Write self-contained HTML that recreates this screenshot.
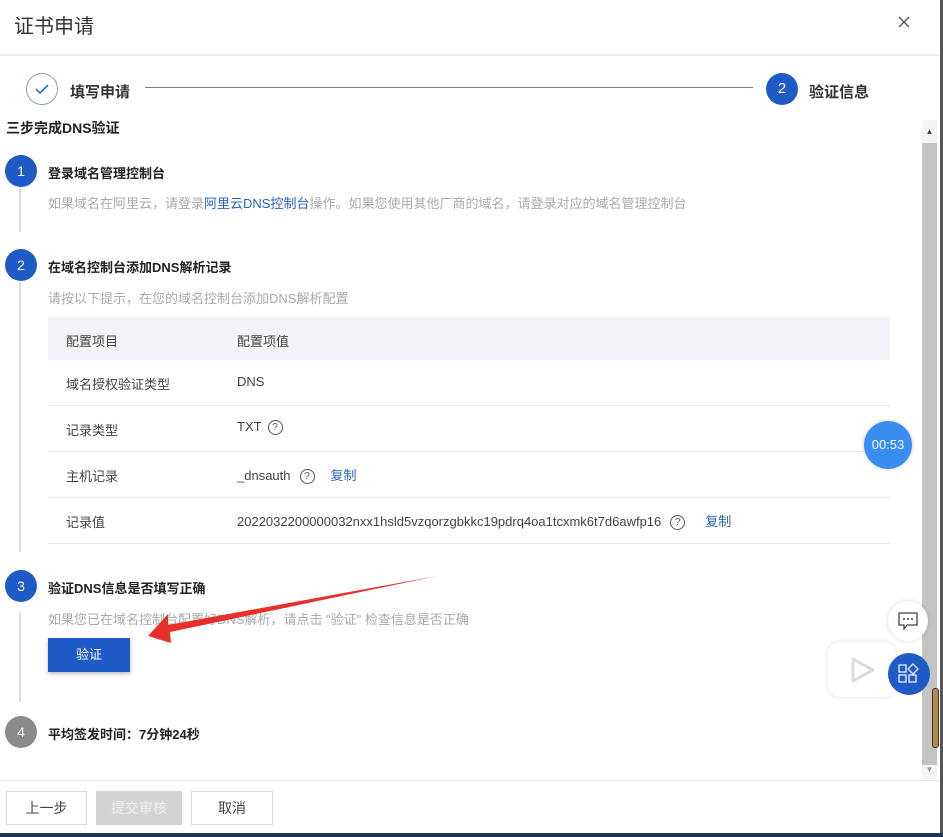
<!DOCTYPE html>
<html><head><meta charset="utf-8"><style>
*{margin:0;padding:0;box-sizing:border-box}
body{width:943px;height:837px;overflow:hidden;background:#fff;position:relative;font-family:"Liberation Sans","Noto Sans CJK SC",sans-serif;color:#333}
.a{position:absolute;white-space:nowrap}
.c{position:absolute;width:32px;height:32px;border-radius:50%;background:#1e5bc6;color:#fff;font-size:14px;text-align:center;line-height:32px}
.t{font-size:13px;font-weight:bold;color:#222}
.g{font-size:13px;color:#aaa}
.row{position:absolute;left:48px;width:842px;height:46px;border-bottom:1px solid #e8e8e8;font-size:13px;color:#444}
.row span{position:absolute;top:14px}
.q{display:inline-block;width:15px;height:15px;border:1.3px solid #555;border-radius:50%;font-size:10px;line-height:13px;text-align:center;color:#555;vertical-align:middle;margin-left:6px}
.lk{color:#2a62b8;margin-left:16px}
.btn{position:absolute;top:791px;height:34px;border:1px solid #d8d8d8;font-size:14px;text-align:center;line-height:32px;color:#444;background:#fff}
</style></head><body>
<div class="a" style="left:14px;top:10px;font-size:20px;color:#333">证书申请</div>
<svg class="a" style="left:898px;top:16px" width="12" height="12"><path d="M1 1L11 11M11 1L1 11" stroke="#555" stroke-width="1.3"/></svg>
<div class="a" style="left:0;top:54px;width:940px;height:2px;background:#f0f0f0"></div>
<div class="a" style="left:940px;top:0;width:3px;height:837px;background:#555"></div>

<div class="a" style="left:26px;top:73px;width:32px;height:32px;border:1.5px solid #8a9bbd;border-radius:50%"></div>
<svg class="a" style="left:34px;top:82px" width="16" height="14"><path d="M2 7L6 11L14 3" stroke="#1e5bc6" stroke-width="1.5" fill="none"/></svg>
<div class="a" style="left:70px;top:81px;font-size:15px;font-weight:bold;color:#333">填写申请</div>
<div class="a" style="left:145px;top:87px;width:608px;height:1px;background:#6a7fa6"></div>
<div class="c" style="left:766px;top:73px;font-size:15px">2</div>
<div class="a" style="left:809px;top:81px;font-size:15px;font-weight:bold;color:#333">验证信息</div>

<div class="a t" style="left:6px;top:118px;font-size:14px">三步完成DNS验证</div>

<div class="a" style="left:922px;top:120px;width:15px;height:23px;background:#f4f4f4;font-size:8px;text-align:center;line-height:23px;color:#444">▲</div>
<div class="a" style="left:922px;top:143px;width:15px;height:622px;background:#c3c3c3"></div>
<div class="a" style="left:932px;top:688px;width:7px;height:60px;background:#b38a4a;border:1px solid #333;border-radius:3px"></div>
<div class="a" style="left:922px;top:765px;width:15px;height:15px;background:#f4f4f4;font-size:8px;text-align:center;color:#999">▼</div>

<div class="a" style="left:19px;top:187px;width:2px;height:45px;background:#ddd"></div>
<div class="a" style="left:19px;top:282px;width:2px;height:270px;background:#ddd"></div>
<div class="a" style="left:19px;top:612px;width:2px;height:90px;background:#ddd"></div>

<div class="c" style="left:5px;top:155px">1</div>
<div class="a t" style="left:48px;top:163px">登录域名管理控制台</div>
<div class="a g" style="left:48px;top:193px">如果域名在阿里云，请登录<span style="color:#2a62b8">阿里云DNS控制台</span>操作。如果您使用其他厂商的域名，请登录对应的域名管理控制台</div>

<div class="c" style="left:5px;top:249px">2</div>
<div class="a t" style="left:48px;top:257px">在域名控制台添加DNS解析记录</div>
<div class="a g" style="left:48px;top:288px">请按以下提示，在您的域名控制台添加DNS解析配置</div>

<div class="row" style="top:317px;height:43px;background:#f2f4f7;border:none"><span style="left:18px;top:14px">配置项目</span><span style="left:189px;top:14px">配置项值</span></div>
<div class="row" style="top:360px"><span style="left:18px">域名授权验证类型</span><span style="left:189px">DNS</span></div>
<div class="row" style="top:406px"><span style="left:18px">记录类型</span><span style="left:189px;top:13px">TXT<i class="q" style="font-style:normal">?</i></span></div>
<div class="row" style="top:452px"><span style="left:18px">主机记录</span><span style="left:189px;top:13px">_dnsauth<i class="q" style="font-style:normal;margin-left:9px">?</i><span class="lk" style="position:static">复制</span></span></div>
<div class="row" style="top:498px"><span style="left:18px">记录值</span><span style="left:189px;top:13px">2022032200000032nxx1hsld5vzqorzgbkkc19pdrq4oa1tcxmk6t7d6awfp16<i class="q" style="font-style:normal;margin-left:9px">?</i><span class="lk" style="position:static;margin-left:20px">复制</span></span></div>

<div class="c" style="left:5px;top:570px">3</div>
<div class="a t" style="left:48px;top:578px">验证DNS信息是否填写正确</div>
<div class="a g" style="left:48px;top:609px">如果您已在域名控制台配置好DNS解析，请点击 "验证" 检查信息是否正确</div>
<div class="a" style="left:48px;top:638px;width:82px;height:34px;background:#1e5bc6;color:#fff;font-size:13px;text-align:center;line-height:34px;box-shadow:0 2px 4px rgba(0,0,0,.25)">验证 </div>
<svg class="a" style="left:0;top:0" width="943" height="837"><polygon points="148,636 168,614 168,625 437,576 170,632 171,643" fill="#e8302a"/></svg>

<div class="c" style="left:5px;top:716px;background:#8a8a8a">4</div>
<div class="a t" style="left:48px;top:724px">平均签发时间：7分钟24秒</div>

<div class="a" style="left:864px;top:421px;width:48px;height:48px;border-radius:50%;background:#3a8df0;color:#fff;font-size:13px;text-align:center;line-height:48px;box-shadow:0 0 4px rgba(0,0,0,.2)">00:53</div>
<div class="a" style="left:888px;top:601px;width:40px;height:40px;border-radius:50%;background:#fff;box-shadow:0 0 4px rgba(0,0,0,.15)"></div>
<svg class="a" style="left:898px;top:612px" width="20" height="18"><path d="M1 1H19V13H9L6 17V13H1Z" stroke="#444" stroke-width="1.3" fill="none"/><circle cx="6" cy="7" r="1" fill="#444"/><circle cx="10" cy="7" r="1" fill="#444"/><circle cx="14" cy="7" r="1" fill="#444"/></svg>
<div class="a" style="left:828px;top:642px;width:68px;height:55px;border-radius:12px;background:#fff;box-shadow:0 0 4px rgba(0,0,0,.12)"></div>
<svg class="a" style="left:850px;top:656px" width="26" height="28"><path d="M3 3L23 14L3 25Z" stroke="#ddd" stroke-width="3" fill="none" stroke-linejoin="round"/></svg>
<div class="a" style="left:888px;top:653px;width:42px;height:42px;border-radius:50%;background:#1e5bc6"></div>
<svg class="a" style="left:898px;top:663px" width="22" height="22"><g stroke="#fff" stroke-width="1.2" fill="none"><rect x="1" y="2" width="7" height="7"/><rect x="1" y="12" width="7" height="7"/><rect x="11" y="12" width="7" height="7"/><path d="M15 1L20 6L15 11L10 6Z"/></g></svg>

<div class="a" style="left:0;top:780px;width:940px;height:1px;background:#e8e8e8"></div>
<div class="btn" style="left:6px;width:81px">上一步</div>
<div class="btn" style="left:96px;width:86px;background:#d4d4d4;border-color:#d4d4d4;color:#eee">提交审核</div>
<div class="btn" style="left:191px;width:82px">取消</div>
<div class="a" style="left:0;top:833px;width:943px;height:4px;background:#1a3a5a"></div>
</body></html>
